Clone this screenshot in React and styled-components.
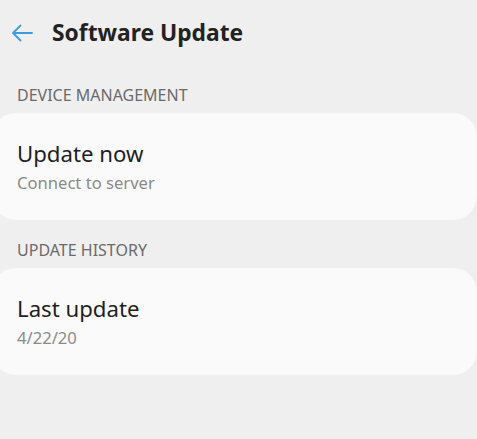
import React from "react";
import styled, { createGlobalStyle } from "styled-components";

const GlobalStyle = createGlobalStyle`
  html, body {
    margin: 0;
    padding: 0;
    background: #efefef;
    overflow: hidden;
  }
  body {
    font-family: "Noto Sans", "Open Sans", sans-serif;
  }
`;

// halaman utama
const Screen = styled.div`
  width: 477px;
  height: 439px;
  background: #efefef;
  display: flex;
  flex-direction: column;
`;

// bar judul di atas
const TopBar = styled.div`
  height: 65px;
  display: flex;
  align-items: center;
  padding-left: 10px;
  gap: 18px;
`;

const BackButton = styled.button`
  border: none;
  background: none;
  padding: 0;
  width: 24px;
  height: 24px;
  display: flex;
  align-items: center;
  justify-content: center;
`;

const Title = styled.h1`
  margin: 0;
  font-size: 22.8px;
  font-weight: 700;
  color: #222;
`;

// label kategori
const SectionLabel = styled.div`
  padding: 20px 17px 8px;
  font-size: 16px;
  color: #6a6a6a;
  line-height: 20px;
`;

// kartu putih dengan sudut bulat
const Card = styled.div`
  margin: 0 0 0 -8px;
  padding: 27px 25px 27px;
  background: #fafafa;
  border-radius: 24px;
  display: flex;
  flex-direction: column;
  gap: 5px;
`;

const ItemTitle = styled.div`
  font-size: 22.2px;
  color: #1f1f1f;
  line-height: 28px;
`;

const ItemSub = styled.div`
  font-size: 16.6px;
  color: #8a8a8a;
  line-height: 20px;
`;

const BackIcon = () => (
  <svg width="22" height="18" viewBox="0 0 22 18" fill="none">
    <path
      d="M21 9H2M9.5 1.5L2 9l7.5 7.5"
      stroke="#3d9ce0"
      strokeWidth="1.8"
      strokeLinecap="round"
      strokeLinejoin="round"
    />
  </svg>
);

const App = () => {
  return (
    <Screen>
      <GlobalStyle />
      <TopBar>
        <BackButton>
          <BackIcon />
        </BackButton>
        <Title>Software Update</Title>
      </TopBar>
      <SectionLabel>DEVICE MANAGEMENT</SectionLabel>
      <Card>
        <ItemTitle>Update now</ItemTitle>
        <ItemSub>Connect to server</ItemSub>
      </Card>
      <SectionLabel>UPDATE HISTORY</SectionLabel>
      <Card>
        <ItemTitle>Last update</ItemTitle>
        <ItemSub>4/22/20</ItemSub>
      </Card>
    </Screen>
  );
};

export default App;
